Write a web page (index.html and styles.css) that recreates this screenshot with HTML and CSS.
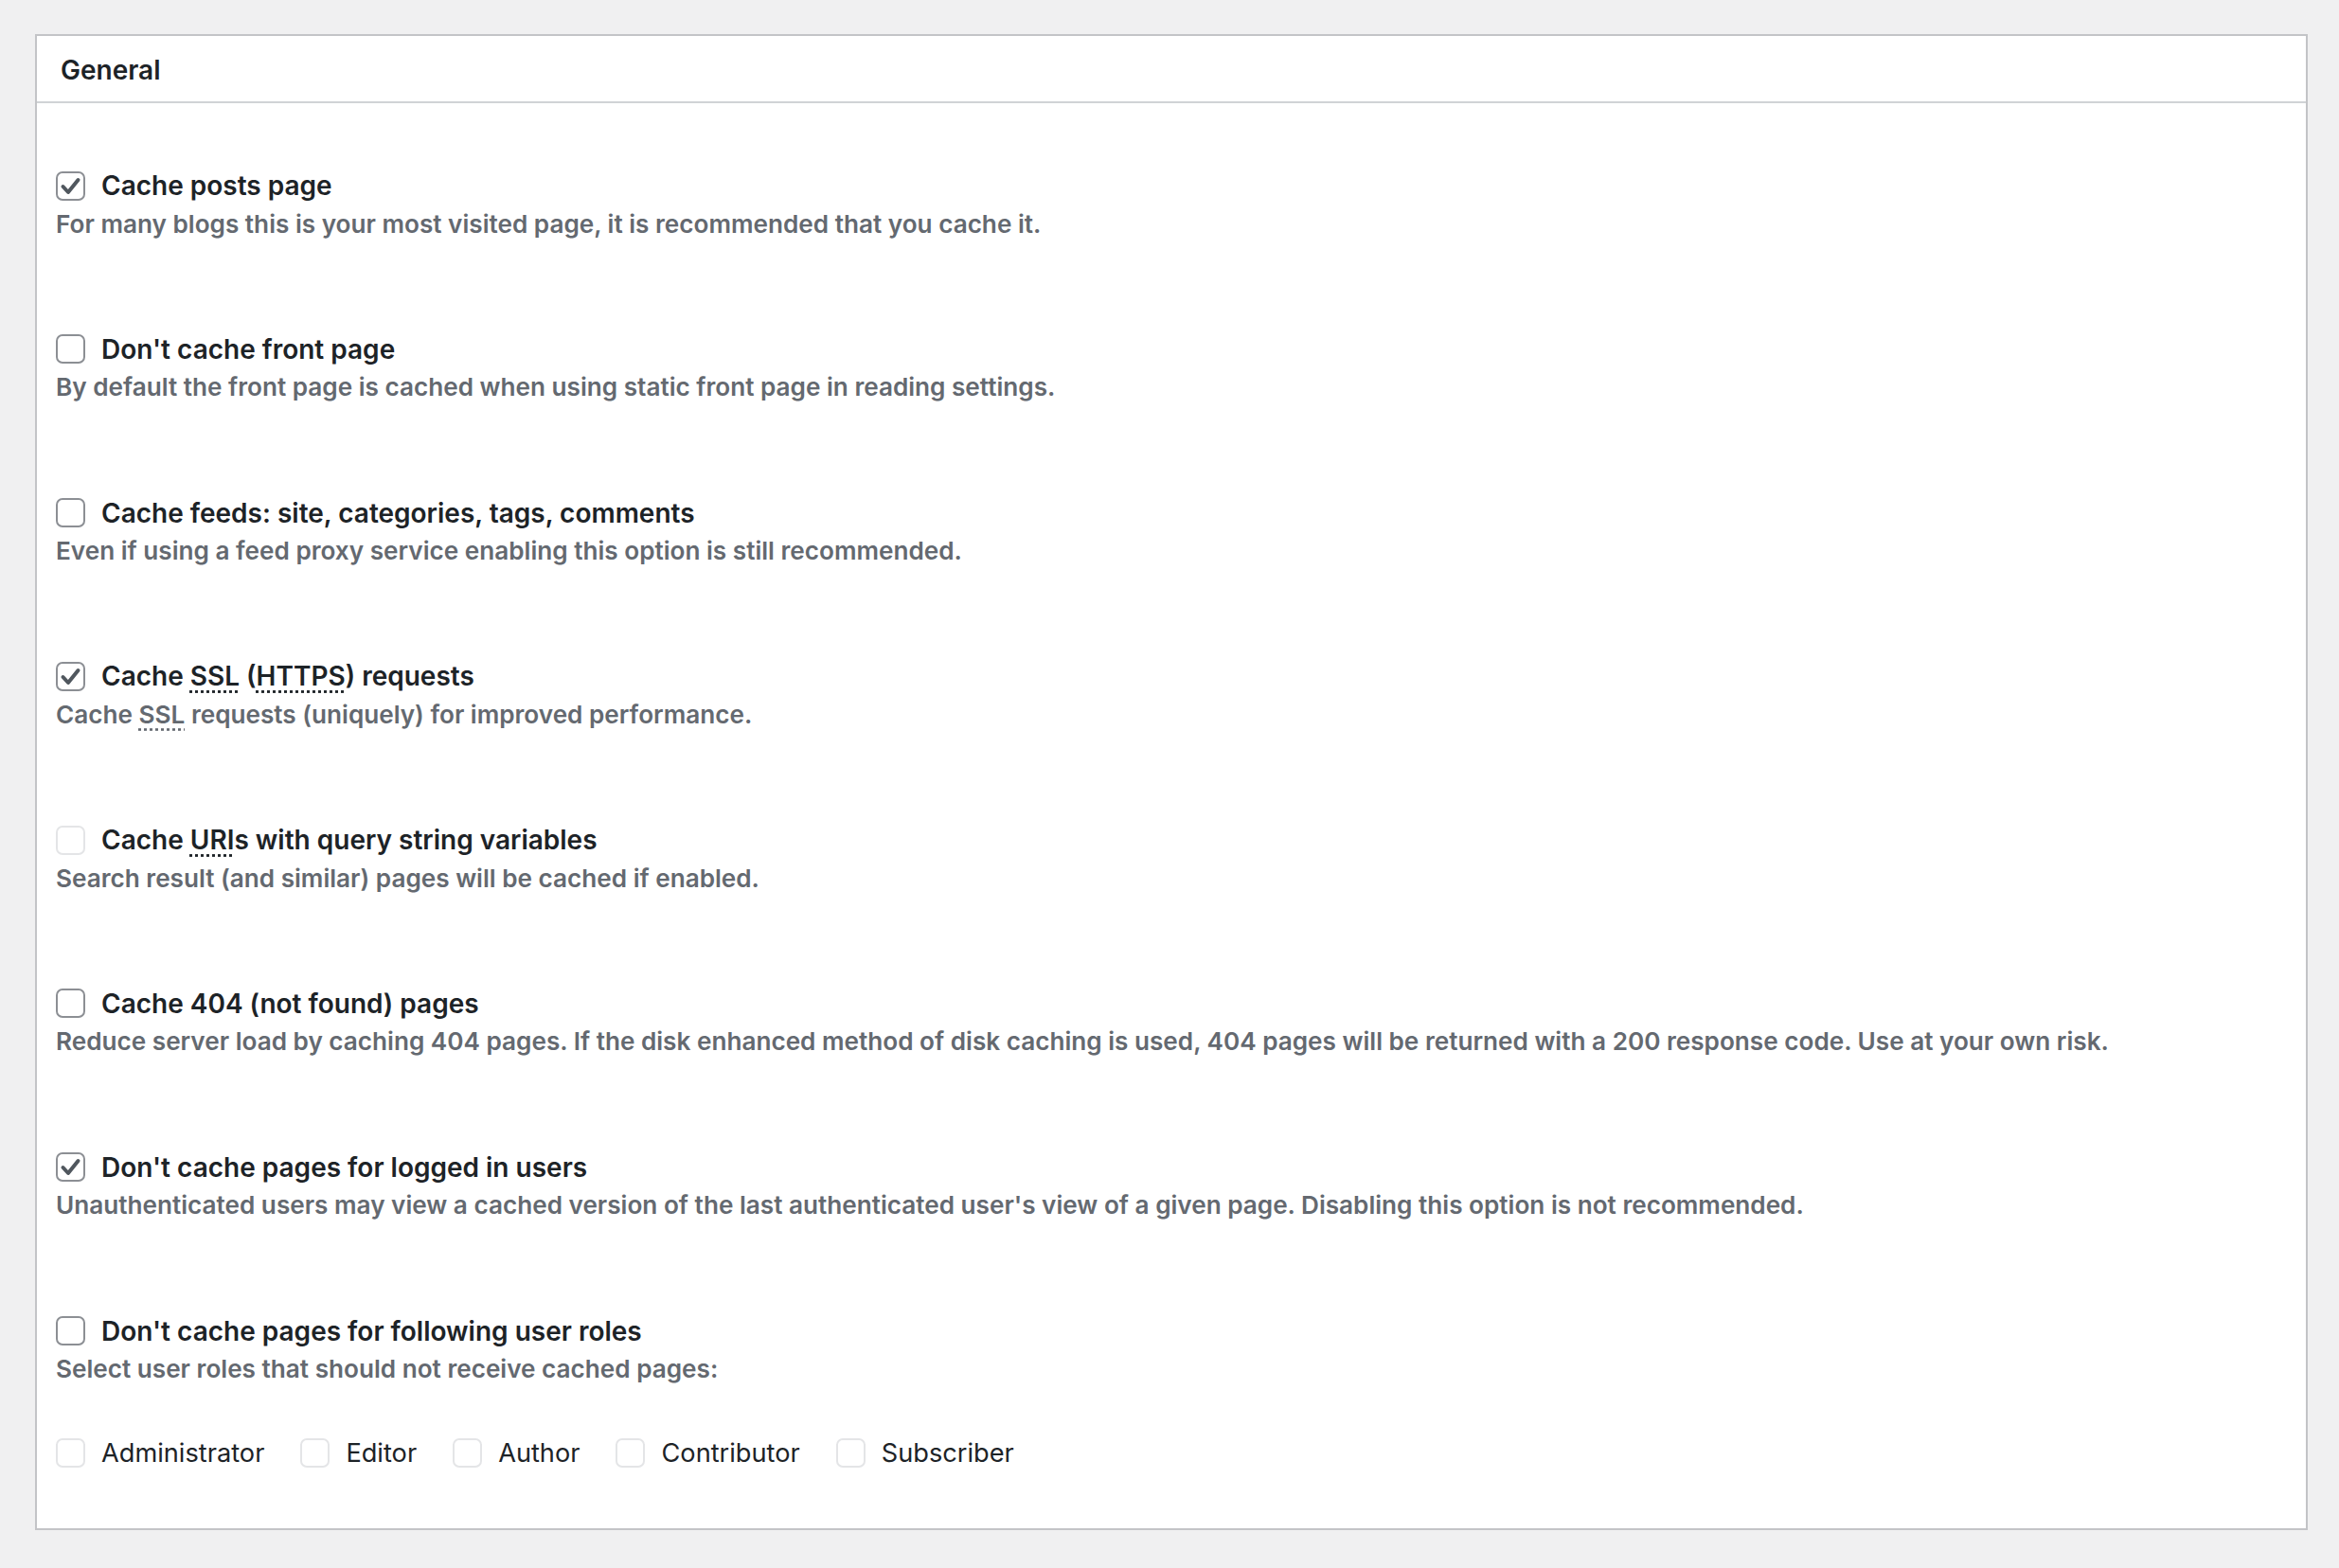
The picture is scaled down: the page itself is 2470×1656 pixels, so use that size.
FILE: index.html
```html
<!DOCTYPE html>
<html lang="en">
<head>
    <meta charset="UTF-8">
    <title>Page Cache - General</title>
    <link rel="stylesheet" href="styles.css">
</head>
<body>
    <div class="postbox">
        <div class="postbox-header">
            <h2>General</h2>
        </div>
        <div class="inside">
            <div class="option">
                <label class="option-head">
                    <span class="check checked"><svg viewBox="0 0 27 27"><path d="M5.5 14l5.5 6L21.5 7"/></svg></span>
                    Cache posts page
                </label>
                <p class="description">For many blogs this is your most visited page, it is recommended that you cache it.</p>
            </div>
            <div class="option">
                <label class="option-head">
                    <span class="check"></span>
                    Don't cache front page
                </label>
                <p class="description">By default the front page is cached when using static front page in reading settings.</p>
            </div>
            <div class="option">
                <label class="option-head">
                    <span class="check"></span>
                    Cache feeds: site, categories, tags, comments
                </label>
                <p class="description">Even if using a feed proxy service enabling this option is still recommended.</p>
            </div>
            <div class="option">
                <label class="option-head">
                    <span class="check checked"><svg viewBox="0 0 27 27"><path d="M5.5 14l5.5 6L21.5 7"/></svg></span>
                    <span>Cache <abbr title="Secure Socket Layer">SSL</abbr> (<abbr title="HyperText Transfer Protocol over SSL">HTTPS</abbr>) requests</span>
                </label>
                <p class="description">Cache <abbr title="Secure Socket Layer">SSL</abbr> requests (uniquely) for improved performance.</p>
            </div>
            <div class="option">
                <label class="option-head">
                    <span class="check disabled"></span>
                    <span>Cache <abbr title="Uniform Resource Identifier">URI</abbr>s with query string variables</span>
                </label>
                <p class="description">Search result (and similar) pages will be cached if enabled.</p>
            </div>
            <div class="option">
                <label class="option-head">
                    <span class="check"></span>
                    Cache 404 (not found) pages
                </label>
                <p class="description">Reduce server load by caching 404 pages. If the disk enhanced method of disk caching is used, 404 pages will be returned with a 200 response code. Use at your own risk.</p>
            </div>
            <div class="option">
                <label class="option-head">
                    <span class="check checked"><svg viewBox="0 0 27 27"><path d="M5.5 14l5.5 6L21.5 7"/></svg></span>
                    Don't cache pages for logged in users
                </label>
                <p class="description">Unauthenticated users may view a cached version of the last authenticated user's view of a given page. Disabling this option is not recommended.</p>
            </div>
            <div class="option last">
                <label class="option-head">
                    <span class="check"></span>
                    Don't cache pages for following user roles
                </label>
                <p class="description">Select user roles that should not receive cached pages:</p>
            </div>
            <div class="roles">
                <label class="role"><span class="check disabled"></span>Administrator</label>
                <label class="role"><span class="check disabled"></span>Editor</label>
                <label class="role"><span class="check disabled"></span>Author</label>
                <label class="role"><span class="check disabled"></span>Contributor</label>
                <label class="role"><span class="check disabled"></span>Subscriber</label>
            </div>
        </div>
    </div>
</body>
</html>
```

FILE: styles.css
```css
body {
    margin: 0;
    background: #f0f0f1;
    font-family: Inter, "Noto Sans", sans-serif;
    color: #1d2327;
}
.postbox {
    margin: 36px 33px 40px 37px;
    background: #fff;
    border: 2px solid #c3c4c7;
}
.postbox-header {
    box-sizing: border-box;
    height: 71px;
    display: flex;
    align-items: center;
    padding: 2px 0 0 25px;
    border-bottom: 2px solid #d0d3d6;
}
.postbox-header h2 {
    margin: 0;
    font-size: 28px;
    font-weight: 600;
}
.inside {
    padding: 71.5px 20px 64px 20px;
}
.option {
    margin-bottom: 98.8px;
}
.option.last {
    margin-bottom: 55px;
}
.option-head {
    display: flex;
    align-items: center;
    gap: 17px;
    height: 31px;
    font-size: 28px;
    font-weight: 600;
}
.description {
    margin: 7px 0 0;
    line-height: 36px;
    font-size: 26.15px;
    font-weight: 600;
    color: #646970;
}
abbr {
    text-decoration: underline dotted;
    text-underline-offset: 5px;
}
.check {
    box-sizing: border-box;
    width: 31px;
    height: 31px;
    flex: none;
    border: 2px solid #8c8f94;
    border-radius: 7px;
    background: #fff;
    display: flex;
}
.check svg {
    width: 100%;
    height: 100%;
    fill: none;
    stroke: #50575e;
    stroke-width: 4;
    stroke-linecap: round;
    stroke-linejoin: round;
}
.check.disabled {
    border-color: #e4e5e7;
}
.roles {
    display: flex;
    gap: 38px;
}
.role {
    display: flex;
    align-items: center;
    gap: 17px;
    height: 31px;
    font-size: 27.2px;
}
```
